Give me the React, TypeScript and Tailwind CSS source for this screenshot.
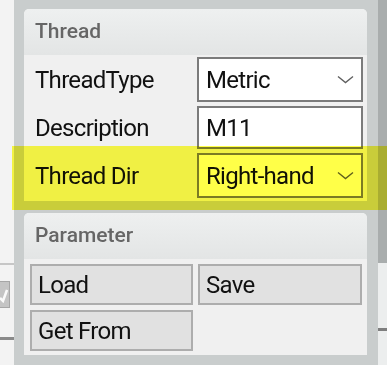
import React from "react";

type FieldRowProps = {
  label: string;
  value: string;
  combo?: boolean;
};

function Chevron() {
  return (
    <svg width="17" height="9" viewBox="0 0 17 9" className="shrink-0">
      <path d="M1 1.5 L8.5 7.5 L16 1.5" fill="none" stroke="#5f5f5f" strokeWidth="1.4" />
    </svg>
  );
}

function FieldRow({ label, value, combo }: FieldRowProps) {
  return (
    <div className="flex items-center">
      <div className="w-[173px] pl-[11px] text-[24px] tracking-[-0.7px] text-[#111]">{label}</div>
      <div
        className={`flex w-[166px] items-center justify-between border-2 border-[#7b7b7b] bg-white pl-[7px] pr-[7px] text-[24px] tracking-[-0.7px] text-[#111] ${
          combo ? "h-[45px]" : "h-[43px]"
        }`}
      >
        <span>{value}</span>
        {combo ? <Chevron /> : null}
      </div>
    </div>
  );
}

function GroupHeader({ title }: { title: string }) {
  return (
    <div className="flex h-[46px] items-center rounded-t-[5px] bg-gradient-to-b from-[#eef0f0] to-[#e3e5e5] pl-[11px] text-[21px] font-medium text-[#666]">
      {title}
    </div>
  );
}

function Button({ label }: { label: string }) {
  return (
    <div className="flex h-[41px] items-center border-2 border-[#adadad] bg-[#e1e1e1] pl-[6px] text-[24px] tracking-[-0.7px] text-[#111]">
      {label}
    </div>
  );
}

export default function App() {
  return (
    <div className="relative flex h-[365px] w-[387px] overflow-hidden bg-[#c9cdcd] font-['Roboto','Liberation_Sans',sans-serif]">
      {/* left neighbour window strip */}
      <div className="flex w-[14px] shrink-0 flex-col bg-[#f3f3f3]">
        <div className="h-[263px]" />
        <div className="h-[2px] bg-[#c6c6c6]" />
        <div className="h-[16px]" />
        <div className="flex h-[27px] w-[10px] items-center border border-l-0 border-[#a6a6a6] bg-[#c4c4c4]">
          <svg width="8" height="16" viewBox="0 0 8 16">
            <path d="M0 11 L3 14 L7 3" fill="none" stroke="#fafafa" strokeWidth="2.5" />
          </svg>
        </div>
        <div className="h-[29px]" />
        <div className="h-[3px] bg-[#8a8a8a]" />
      </div>

      <div className="ml-[10px] flex w-[343px] shrink-0 flex-col pt-[9px]">
        <div className="flex h-[192px] flex-col rounded-t-[5px] bg-[#f0f0f0]">
          <GroupHeader title="Thread" />
          <div className="flex flex-col gap-[4px] pt-[2px]">
            <FieldRow label="ThreadType" value="Metric" combo />
            <FieldRow label="Description" value="M11" />
            <FieldRow label="Thread Dir" value="Right-hand" combo />
          </div>
        </div>

        <div className="mt-[12px] flex h-[142px] flex-col rounded-t-[5px] bg-[#f0f0f0]">
          <GroupHeader title="Parameter" />
          <div className="grid grid-cols-[163px_164px] gap-[5px] pl-[6px] pt-[5px]">
            <Button label="Load" />
            <Button label="Save" />
            <Button label="Get From" />
          </div>
        </div>
      </div>

      {/* right neighbour strip */}
      <div className="ml-[11px] flex w-[9px] shrink-0 flex-col">
        <div className="h-[263px] bg-[#a9adad]" />
        <div className="flex flex-1 flex-col bg-[#eceeee]">
          <div className="h-[65px]" />
          <div className="h-[3px] bg-[#7e7e7e]" />
        </div>
      </div>

      {/* highlighter mark */}
      <div className="pointer-events-none absolute left-[12px] top-[146px] h-[64px] w-[375px] bg-[#ffff48] mix-blend-multiply" />
    </div>
  );
}
